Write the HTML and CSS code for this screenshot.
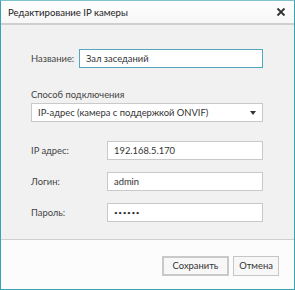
FILE: index.html
```html
<!DOCTYPE html>
<html lang="ru">
<head>
<meta charset="utf-8">
<link rel="stylesheet" href="styles.css">
</head>
<body>
<div class="window">
  <div class="titlebar">
    <span class="title">Редактирование IP камеры</span>
    <svg class="close" width="10" height="10" viewBox="0 0 10 10"><path d="M1.5 1.5L8.5 8.5M8.5 1.5L1.5 8.5" stroke="#333" stroke-width="1.8"/></svg>
  </div>
  <div class="content">
    <div class="row name-row">
      <span class="label">Название:</span>
      <div class="input focused">Зал заседаний</div>
    </div>
    <div class="group">
      <div class="label">Способ подключения</div>
      <div class="select">
        <span>IP-адрес (камера с поддержкой ONVIF)</span>
        <svg width="6" height="4" viewBox="0 0 6 4"><path d="M0 0H6L3 4Z" fill="#333"/></svg>
      </div>
    </div>
    <div class="row field">
      <span class="label wide">IP адрес:</span>
      <div class="input">192.168.5.170</div>
    </div>
    <div class="row field">
      <span class="label wide">Логин:</span>
      <div class="input">admin</div>
    </div>
    <div class="row field">
      <span class="label wide">Пароль:</span>
      <div class="input pass">••••••</div>
    </div>
  </div>
  <div class="footer">
    <div class="btn primary">Сохранить</div>
    <div class="btn cancel">Отмена</div>
  </div>
</div>
</body>
</html>
```
FILE: styles.css
```css
html, body {
  margin: 0;
  padding: 0;
}
body {
  font-family: Lato, "Noto Sans", sans-serif;
  font-size: 9.4px;
  color: #333;
  background: #fff;
}
.window {
  width: 295px;
  height: 290px;
  box-sizing: border-box;
  border: 1px solid #3aa0b4;
  border-top-color: #7cc3cf;
  display: flex;
  flex-direction: column;
  background: #f1f1f1;
}
.titlebar {
  height: 22px;
  flex: none;
  background: linear-gradient(#fefefe, #f7f7f7);
  border-bottom: 2px solid #cfcfcf;
  display: flex;
  align-items: center;
  justify-content: space-between;
  padding: 0 6px 0 7px;
}
.title {
  font-size: 9.6px;
  color: #222;
}
.close {
  margin-right: 2px;
}
.content {
  flex: 1;
  padding: 24px 31px 0 30px;
  display: flex;
  flex-direction: column;
}
.row {
  display: flex;
  align-items: center;
}
.label {
  color: #444;
}
.name-row .label {
  width: 48px;
  flex: none;
}
.input, .select {
  height: 19px;
  box-sizing: border-box;
  border: 1px solid #c9c9c9;
  background: #fff;
  padding: 0 6px;
  display: flex;
  align-items: center;
  flex: 1;
  color: #333;
}
.input.focused {
  border-color: #52a7bd;
}
.group {
  margin-top: 21px;
}
.group .label {
  margin-bottom: 3px;
}
.select {
  justify-content: space-between;
  padding-right: 6px;
}
.field {
  margin-top: 12px;
}
.group + .field {
  margin-top: 19px;
}
.label.wide {
  width: 76px;
  flex: none;
}
.pass {
  font-size: 6.5px;
  letter-spacing: 0.6px;
}
.footer {
  height: 47px;
  flex: none;
  background: #fcfcfc;
  border-top: 1px solid #cfcfcf;
  display: flex;
  justify-content: flex-end;
  align-items: center;
  gap: 4px;
  padding: 2px 15px 0 0;
}
.btn {
  height: 20px;
  box-sizing: border-box;
  border: 1px solid #c6c6c6;
  background: #f7f7f7;
  display: flex;
  align-items: center;
  justify-content: center;
  color: #333;
}
.btn.primary {
  width: 67px;
  border: 2px solid #c9c9c9;
}
.btn.cancel {
  width: 46px;
}
```
